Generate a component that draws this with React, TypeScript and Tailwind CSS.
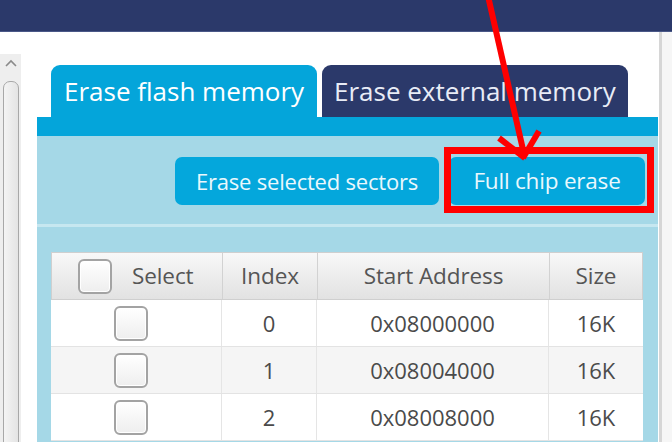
import React from "react";

const FONT = { fontFamily: '"Open Sans", "Noto Sans", sans-serif' };

type Row = { index: number; address: string; size: string };

const ROWS: Row[] = [
  { index: 0, address: "0x08000000", size: "16K" },
  { index: 1, address: "0x08004000", size: "16K" },
  { index: 2, address: "0x08008000", size: "16K" },
];

function Checkbox() {
  return (
    <div className="h-[35px] w-[34px] shrink-0 rounded-[6px] border-2 border-[#a3a3a3] bg-gradient-to-b from-white to-[#eeeeee] shadow-[inset_0_0_0_1px_#ffffff]" />
  );
}

function LeftScrollbar() {
  return (
    <div className="mt-[22px] flex w-[21px] flex-col items-center bg-[#eeeeee]">
      <svg width="14" height="10" viewBox="0 0 14 10" className="mt-[4px]">
        <path d="M2 8 L7 3 L12 8" fill="none" stroke="#8a8a8a" strokeWidth="1.6" />
      </svg>
      <div className="mt-[13px] h-[400px] w-[16px] rounded-t-[7px] border border-[#a8a8a8] bg-gradient-to-r from-[#f4f4f4] to-[#e4e4e4]" />
    </div>
  );
}

function SectorTable() {
  return (
    <div className="w-[592px] text-[#4a4a4a]" style={FONT}>
      <div className="flex h-[48px] border border-[#cfcfcf] bg-gradient-to-b from-[#f8f8f8] to-[#e2e2e2] text-[22.5px] tracking-[-0.1px] text-[#555555]">
        <div className="flex w-[171px] items-center border-r border-[#d2d2d2] pl-[26px]">
          <Checkbox />
          <span className="ml-[20px]">Select</span>
        </div>
        <div className="flex w-[95px] items-center justify-center border-r border-[#d2d2d2]">Index</div>
        <div className="flex w-[232px] items-center justify-center border-r border-[#d2d2d2]">Start Address</div>
        <div className="flex flex-1 items-center justify-center">Size</div>
      </div>
      {ROWS.map((r, i) => (
        <div
          key={r.index}
          className={`flex h-[47px] border-b border-[#e3e3e3] text-[22px] ${i % 2 === 1 ? "bg-[#f5f5f5]" : "bg-white"}`}
        >
          <div className="flex w-[171px] items-center border-r border-[#e5e5e5] pl-[63px]">
            <Checkbox />
          </div>
          <div className="flex w-[95px] items-center justify-center border-r border-[#e5e5e5]">{r.index}</div>
          <div className="flex w-[232px] items-center justify-center border-r border-[#e5e5e5]">{r.address}</div>
          <div className="flex flex-1 items-center justify-center">{r.size}</div>
        </div>
      ))}
    </div>
  );
}

export default function App() {
  return (
    <div className="relative h-[442px] w-[672px] overflow-hidden bg-white" style={FONT}>
      <div className="h-[32px] border-b border-[#4a5888] bg-[#2b396a]" />
      <div className="flex">
        <LeftScrollbar />
        <div className="ml-[16px] w-[621px] pt-[33px]">
          {/* tabs */}
          <div className="flex gap-[5px] pl-[14px]">
            <div className="flex h-[52px] w-[266px] items-center rounded-t-[9px] bg-[#04a5da] pl-[13px] text-[26px] text-white">
              Erase flash memory
            </div>
            <div className="flex h-[52px] w-[306px] items-center rounded-t-[9px] bg-[#2b396a] pl-[12px] text-[26px] text-[#e8ecf6]">
              Erase external memory
            </div>
          </div>
          <div className="h-[19px] bg-[#04a5da]" />
          <div className="h-[320px] bg-[#a5d8e7]">
            <div className="flex justify-end gap-[10px] pr-[13px] pt-[21px]">
              <button className="h-[48px] w-[264px] rounded-[7px] bg-[#04a7dc] text-[22px] tracking-[-0.2px] text-[#eaf8fd]">
                Erase selected sectors
              </button>
              <button className="h-[48px] w-[196px] rounded-[7px] bg-[#04a7dc] text-[22.5px] tracking-[-0.2px] text-[#eaf8fd]">
                Full chip erase
              </button>
            </div>
            <div className="mt-[19px] h-[3px] bg-[#c6e7f0]" />
            <div className="pl-[14px] pt-[25px]">
              <SectorTable />
            </div>
          </div>
        </div>
        <div className="w-[1px] bg-white" />
        <div className="w-[3px] bg-[#d6d6d6]" />
        <div className="flex-1 bg-[#f6f6f6]" />
      </div>

      {/* annotation: red frame + arrow */}
      <div className="absolute left-[444px] top-[147px] h-[66px] w-[210px] border-[7px] border-[#ff0000]" />
      <svg className="absolute left-0 top-0" width="672" height="442" viewBox="0 0 672 442">
        <g stroke="#ff0000" strokeWidth="6" strokeLinecap="butt" fill="none">
          <line x1="488" y1="-4" x2="524" y2="154" />
          <line x1="499" y1="138" x2="525" y2="158" />
          <line x1="539" y1="131" x2="523" y2="158" />
        </g>
      </svg>
    </div>
  );
}
